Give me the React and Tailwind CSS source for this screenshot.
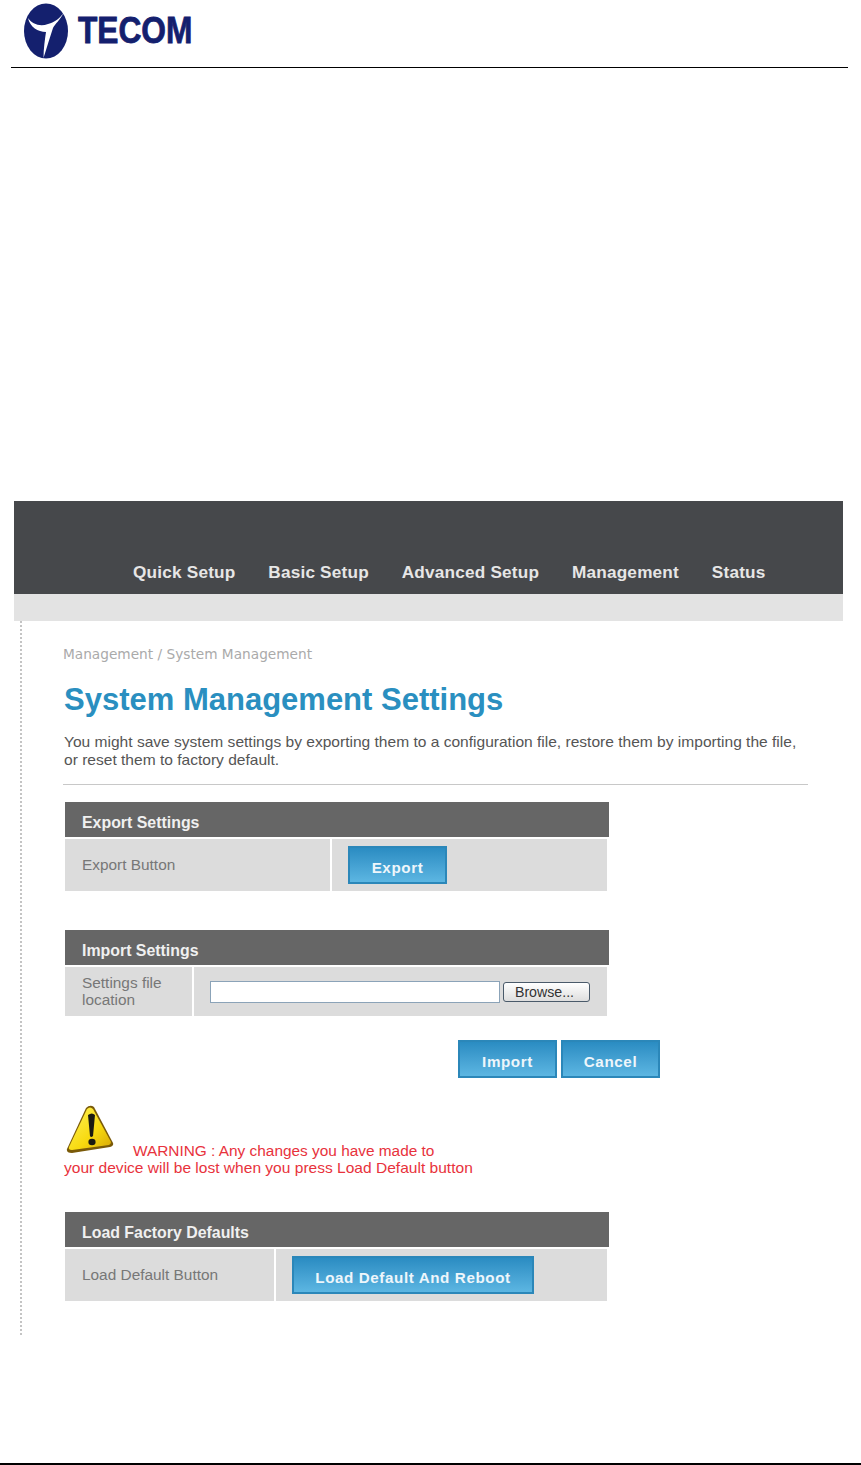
const sans = { fontFamily: '"Liberation Sans", Arial, sans-serif' }

function BlueButton({ label, className = '' }) {
  return (
    <button
      type="button"
      className={`h-[38px] border-2 border-[#2b87b9] bg-gradient-to-b from-[#2a8cc2] to-[#5cb6e2] pt-[5px] text-center text-[15.2px] leading-[18px] font-bold tracking-[0.6px] text-[#eef6fb] ${className}`}
    >
      {label}
    </button>
  )
}

function SettingsTable({ title, label, rowClass = 'h-[52px]', labelClass, children }) {
  return (
    <div className="ml-[2px] w-[544px]">
      <div className="flex h-[35px] items-center bg-[#666666] pl-[17px] pt-[6px] text-[15.9px] font-bold text-[#f0f0f0]">
        {title}
      </div>
      <div className={`mt-[2px] flex w-[542px] gap-[2px] ${rowClass}`}>
        <div className={`flex shrink-0 items-center bg-[#dcdcdc] pb-[2px] pl-[17px] text-[15.4px] leading-[17px] text-[#777777] ${labelClass}`}>
          {label}
        </div>
        <div className="flex flex-1 items-center bg-[#dcdcdc]">{children}</div>
      </div>
    </div>
  )
}

function WarningIcon() {
  return (
    <svg width="48" height="49" viewBox="0 0 48 49" className="shrink-0">
      <defs>
        <linearGradient id="warnFace" x1="0" y1="0" x2="1" y2="1">
          <stop offset="0" stopColor="#fff35a" />
          <stop offset="0.6" stopColor="#f7d90f" />
          <stop offset="1" stopColor="#d8a806" />
        </linearGradient>
      </defs>
      <path d="M1 44 L20 3 Q24 -1 28 2 L47 38 Q48 41 44 42 L6 48 Q0 48 1 44 Z" fill="#7a5a08" />
      <path d="M3 42 L21 4 Q24 1 27 4 L45 37 Q45 39 43 40 L6 45 Q2 45 3 42 Z" fill="url(#warnFace)" />
      <path d="M22 10 Q26 7 29 10 L27 31 Q25 33 24 31 Z" fill="#1a1a12" />
      <ellipse cx="26" cy="37" rx="3.6" ry="3.3" fill="#1a1a12" />
    </svg>
  )
}

function TecomLogo() {
  return (
    <div className="flex h-[67px] items-start pl-[12px] pt-[3px]">
      <svg width="46" height="56" viewBox="0 0 46 56" className="shrink-0">
        <ellipse cx="23" cy="28" rx="22" ry="27.5" fill="#14206e" />
        <path d="M5 15 C9 21 17 24 25 21 C32 19 37 15 40.5 10 C37 17 32 21 30 25 C27 34 24 44 20.5 55 C20.5 45 22 36 23 29 C15 29 7 24 5 15 Z" fill="#ffffff" />
      </svg>
      <span className="ml-[9px] mt-[6px] origin-left scale-x-[0.88] text-[36px] font-bold leading-[44px] text-[#14206e] [-webkit-text-stroke:0.8px_#14206e]">
        TECOM
      </span>
    </div>
  )
}

export default function App() {
  const menu = ['Quick Setup', 'Basic Setup', 'Advanced Setup', 'Management', 'Status']

  return (
    <div className="flex h-[1465px] w-[861px] flex-col bg-white" style={sans}>
      {/* Page header */}
      <div className="ml-[11px] mr-[13px] h-[68px] border-b border-black">
        <TecomLogo />
      </div>

      {/* Router screen */}
      <div className="mt-[433px] ml-[14px] w-[829px]">
        <div className="flex h-[93px] items-end gap-[32.8px] bg-[#46484b] pb-[12px] pl-[119px]">
          {menu.map((item) => (
            <span key={item} className="text-[17.2px] font-bold leading-[20px] tracking-[0.2px] text-[#e6e6e6]">{item}</span>
          ))}
        </div>
        <div className="h-[27px] bg-[#e3e3e3]" />
      </div>

      <div className="ml-[20px] h-[714px] border-l-2 border-dotted border-[#c4c4c4] pl-[41px]">
        <div className="mt-[24px] text-[13.7px] leading-[18px] text-[#aaaaaa]" style={{ fontFamily: '"DejaVu Sans", sans-serif' }}>
          Management / System Management
        </div>
        <h1 className="mt-[19px] ml-[1px] text-[31px] font-bold leading-[36px] text-[#2a8fc0]">System Management Settings</h1>
        <p className="mt-[15px] ml-[1px] w-[745px] text-[15.55px] leading-[17.5px] text-[#555555]">
          You might save system settings by exporting them to a configuration file, restore them by importing the file, or reset them to factory default.
        </p>
        <div className="mt-[16px] h-px w-[745px] bg-[#c8c8c8]" />

        <div className="mt-[17px]">
          <SettingsTable title="Export Settings" label="Export Button" labelClass="w-[265px]">
            <BlueButton label="Export" className="ml-[16px] w-[99px]" />
          </SettingsTable>
        </div>

        <div className="mt-[39px]">
          <SettingsTable
            title="Import Settings"
            label={<span className="w-[100px]">Settings file location</span>}
            rowClass="h-[49px]"
            labelClass="w-[127px]"
          >
            <input type="text" className="ml-[16px] h-[22px] w-[290px] border border-[#8ba3b8] bg-white" />
            <button
              type="button"
              className="ml-[3px] h-[20px] w-[87px] rounded-[3px] border border-[#4a5a6a] bg-gradient-to-b from-white to-[#dedede] pr-[4px] text-[14.2px] leading-[16px] text-[#333333]"
            >
              Browse...
            </button>
          </SettingsTable>
        </div>

        <div className="mt-[24px] ml-[395px] flex gap-[4px]">
          <BlueButton label="Import" className="w-[99px]" />
          <BlueButton label="Cancel" className="w-[99px]" />
        </div>

        <div className="mt-[28px] ml-[3px] flex h-[48px] items-end">
          <WarningIcon />
          <span className="ml-[19px] translate-y-[5px] text-[15.4px] leading-[17px] text-[#e8323c]">WARNING : Any changes you have made to</span>
        </div>
        <div className="mt-[5px] ml-[1px] text-[15.55px] leading-[17px] text-[#e8323c]">your device will be lost when you press Load Default button</div>

        <div className="mt-[36px]">
          <SettingsTable title="Load Factory Defaults" label="Load Default Button" labelClass="w-[209px]">
            <BlueButton label="Load Default And Reboot" className="ml-[16px] w-[242px]" />
          </SettingsTable>
        </div>
      </div>

      {/* Page footer */}
      <div className="mt-auto h-[2px] bg-black" />
    </div>
  )
}
